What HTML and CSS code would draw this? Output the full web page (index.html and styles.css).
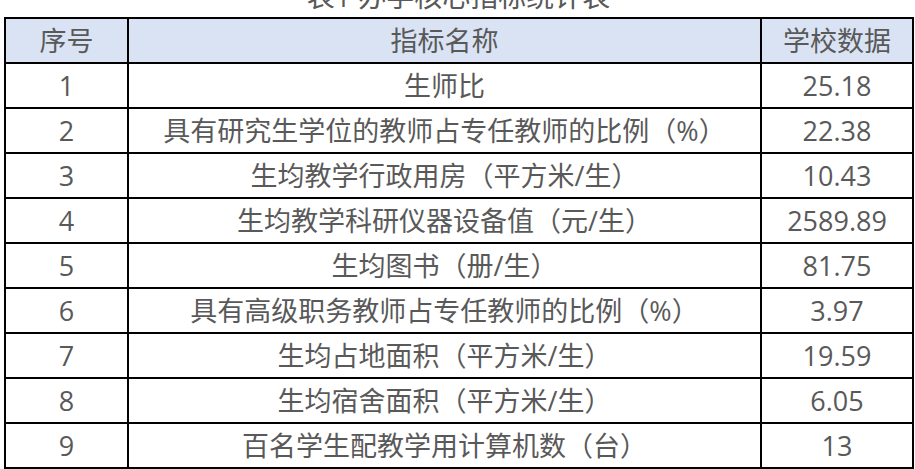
FILE: index.html
```html
<!DOCTYPE html>
<html lang="zh-CN">
<head>
<meta charset="utf-8">
<link rel="stylesheet" href="styles.css">
</head>
<body>
<div class="page">
  <div class="title">表1 办学核心指标统计表</div>
  <table class="stats">
    <colgroup>
      <col class="c-no">
      <col class="c-name">
      <col class="c-val">
    </colgroup>
    <thead>
      <tr><th>序号</th><th>指标名称</th><th>学校数据</th></tr>
    </thead>
    <tbody>
      <tr><td>1</td><td>生师比</td><td>25.18</td></tr>
      <tr><td>2</td><td>具有研究生学位的教师占专任教师的比例（%）</td><td>22.38</td></tr>
      <tr><td>3</td><td>生均教学行政用房（平方米/生）</td><td>10.43</td></tr>
      <tr><td>4</td><td>生均教学科研仪器设备值（元/生）</td><td>2589.89</td></tr>
      <tr><td>5</td><td>生均图书（册/生）</td><td>81.75</td></tr>
      <tr><td>6</td><td>具有高级职务教师占专任教师的比例（%）</td><td>3.97</td></tr>
      <tr><td>7</td><td>生均占地面积（平方米/生）</td><td>19.59</td></tr>
      <tr><td>8</td><td>生均宿舍面积（平方米/生）</td><td>6.05</td></tr>
      <tr><td>9</td><td>百名学生配教学用计算机数（台）</td><td>13</td></tr>
    </tbody>
  </table>
</div>
</body>
</html>
```
FILE: styles.css
```css
html, body {
  margin: 0;
  padding: 0;
  background: #ffffff;
}
.page {
  width: 915px;
  height: 469px;
  overflow: hidden;
  font-family: "Open Sans", "Noto Sans CJK SC", sans-serif;
  color: #595959;
}
.title {
  text-align: center;
  font-size: 28px;
  line-height: 30px;
  height: 36px;
  margin-top: -19px;
  padding-left: 2px;
}
.stats {
  margin-left: 4px;
  width: 908px;
  border-collapse: collapse;
  table-layout: fixed;
  font-size: 27px;
}
.c-no { width: 123px; }
.c-name { width: 633px; }
.c-val { width: 152px; }
.stats th, .stats td {
  border: 2px solid #000;
  height: 43px;
  padding: 0;
  text-align: center;
  vertical-align: middle;
  font-weight: normal;
  line-height: 43px;
  white-space: nowrap;
}
.stats thead th {
  background: #dae3f3;
}
```
